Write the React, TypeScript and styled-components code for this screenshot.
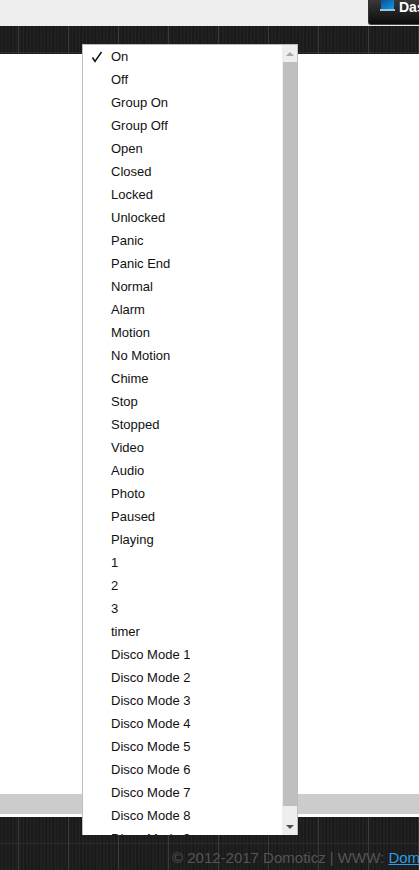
import styled, { createGlobalStyle } from 'styled-components'

const GlobalStyle = createGlobalStyle`
  html, body {
    margin: 0;
    padding: 0;
    background: #fff;
  }
  body {
    font-family: "Liberation Sans", Arial, sans-serif;
  }
`

const darkTexture = `
  background-color: #1e1e1e;
  background-image:
    linear-gradient(90deg, transparent 18px, #3a3a3a 18px, #3a3a3a 19px, transparent 19px),
    linear-gradient(0deg, transparent 26px, #2e2e2e 26px, #2e2e2e 27px, transparent 27px),
    repeating-linear-gradient(90deg, #1c1c1c 0, #1c1c1c 2px, #232323 2px, #232323 3px, #1a1a1a 3px, #1a1a1a 5px, #202020 5px, #202020 7px);
  background-size: 50px 53px, 50px 53px, 7px 7px;
`

const Page = styled.div`
  position: relative;
  width: 419px;
  height: 870px;
  overflow: hidden;
  display: flex;
  flex-direction: column;
`

const TopBar = styled.div`
  height: 26px;
  flex: none;
  background: #eeeeee;
  display: flex;
  justify-content: flex-end;
`

const DashButton = styled.div`
  width: 51px;
  height: 25px;
  display: flex;
  align-items: flex-start;
  gap: 4px;
  padding-left: 11px;
  box-sizing: border-box;
  overflow: hidden;
  border-bottom-left-radius: 3px;
  border-left: 1px solid #333;
  border-bottom: 1px solid #444;
  background: linear-gradient(#383838, #0c0c0c);
  color: #fff;
  font-size: 14px;
  font-weight: bold;
  line-height: 14px;
`

const NavBand = styled.div`
  height: 28px;
  flex: none;
  ${darkTexture}
`

const Content = styled.main`
  height: 740px;
  flex: none;
  background: #fff;
`

const GreyStrip = styled.div`
  height: 20px;
  flex: none;
  background: #cccccc;
`

const Spacer = styled.div`
  height: 3px;
  flex: none;
  background: #fff;
`

const Footer = styled.footer`
  flex: 1;
  ${darkTexture}
  display: flex;
  align-items: flex-end;
  padding: 0 0 3px 172px;
  white-space: nowrap;
  font-size: 15px;
  line-height: 18px;
  color: #555555;
`

const FooterLink = styled.a`
  color: #2a9fe6;
  text-decoration: underline;
`

const Menu = styled.div`
  position: absolute;
  left: 82px;
  top: 44px;
  width: 216px;
  height: 791px;
  box-sizing: border-box;
  background: #fff;
  border: 1px solid #bdbdbd;
  border-bottom: none;
  overflow: hidden;
  display: flex;
`

const MenuList = styled.ul`
  list-style: none;
  margin: 0;
  padding: 0;
  flex: 1;
`

const MenuItem = styled.li`
  position: relative;
  height: 23px;
  padding-left: 28px;
  font-size: 13px;
  line-height: 23px;
  color: #111;
`

const Check = styled.svg`
  position: absolute;
  left: 8px;
  top: 6px;
`

const Scrollbar = styled.div`
  width: 15px;
  flex: none;
  background: #eeeeee;
  display: flex;
  flex-direction: column;
  align-items: center;
`

const ScrollArrow = styled.div<{ $down?: boolean }>`
  height: 17px;
  flex: none;
  display: flex;
  align-items: center;
  justify-content: center;
  margin-top: ${(p) => (p.$down ? 'auto' : '0')};
  &::before {
    content: '';
    border-left: 4px solid transparent;
    border-right: 4px solid transparent;
    ${(p) => (p.$down ? 'border-top: 4px solid #505050;' : 'border-bottom: 4px solid #a8a8a8;')}
  }
`

const ScrollThumb = styled.div`
  height: 744px;
  flex: none;
  width: 14px;
  background: #bfbfbf;
`

const items = [
  'On', 'Off', 'Group On', 'Group Off', 'Open', 'Closed', 'Locked', 'Unlocked',
  'Panic', 'Panic End', 'Normal', 'Alarm', 'Motion', 'No Motion', 'Chime', 'Stop',
  'Stopped', 'Video', 'Audio', 'Photo', 'Paused', 'Playing', '1', '2', '3', 'timer',
  'Disco Mode 1', 'Disco Mode 2', 'Disco Mode 3', 'Disco Mode 4', 'Disco Mode 5',
  'Disco Mode 6', 'Disco Mode 7', 'Disco Mode 8', 'Disco Mode 9',
]

export default function App() {
  return (
    <Page>
      <GlobalStyle />
      <TopBar>
        <DashButton>
          <svg width="15" height="11" viewBox="0 0 15 11" style={{ flex: 'none' }}>
            <defs>
              <linearGradient id="dashIcon" x1="0" y1="0" x2="1" y2="1">
                <stop offset="0" stopColor="#0d4f9e" />
                <stop offset="1" stopColor="#0f9be0" />
              </linearGradient>
            </defs>
            <rect x="1" y="0" width="13" height="9" fill="url(#dashIcon)" />
            <rect x="0" y="9" width="15" height="2" fill="#9cc4dc" />
          </svg>
          <span>Dashboard</span>
        </DashButton>
      </TopBar>
      <NavBand />
      <Content />
      <GreyStrip />
      <Spacer />
      <Footer>
        <span>
          © 2012-2017 Domoticz | WWW: <FooterLink href="#">Domoticz.com</FooterLink>
        </span>
      </Footer>
      <Menu>
        <MenuList>
          {items.map((item, i) => (
            <MenuItem key={item}>
              {i === 0 && (
                <Check width="12" height="12" viewBox="0 0 12 12">
                  <path d="M1.5 6.5 L4 10.5 L10.5 1" fill="none" stroke="#111" strokeWidth="1.5" />
                </Check>
              )}
              {item}
            </MenuItem>
          ))}
        </MenuList>
        <Scrollbar>
          <ScrollArrow />
          <ScrollThumb />
          <ScrollArrow $down />
        </Scrollbar>
      </Menu>
    </Page>
  )
}
